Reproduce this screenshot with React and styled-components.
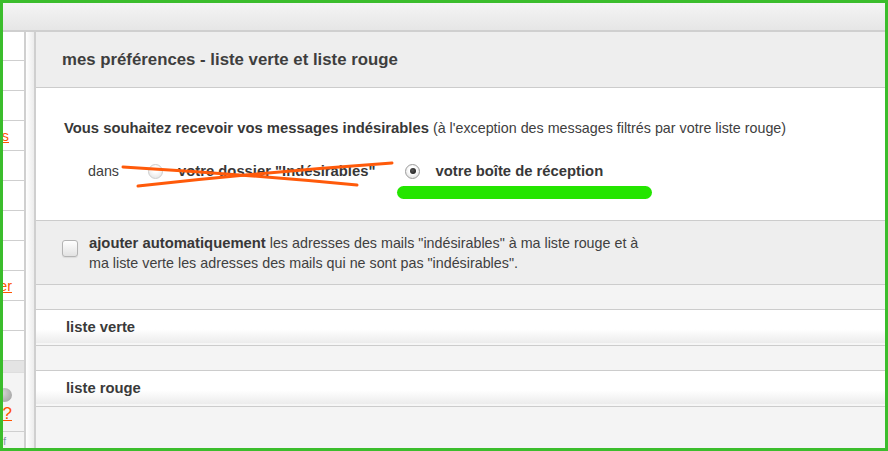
import React from 'react'
import styled, { createGlobalStyle } from 'styled-components'

const GlobalStyle = createGlobalStyle`
  html, body {
    margin: 0;
    padding: 0;
    background: #fff;
  }
  body {
    font-family: "Liberation Sans", Arial, sans-serif;
    color: #404040;
  }
`

const Page = styled.div`
  position: relative;
  width: 888px;
  height: 451px;
  overflow: hidden;
`

const Frame = styled.div`
  box-sizing: border-box;
  width: 100%;
  height: 100%;
  border: 3px solid #3bbd2c;
  display: flex;
  flex-direction: column;
  overflow: hidden;
  background: #f4f4f4;
`

const TopBar = styled.div`
  flex: 0 0 27px;
  background: linear-gradient(#f4f4f4, #e6e6e6);
  border-bottom: 2px solid #cfcfcf;
`

const Body = styled.div`
  flex: 1;
  display: flex;
  min-height: 0;
`

// left menu, cut off by the screenshot edge
const Sidebar = styled.div`
  width: 21px;
  flex-shrink: 0;
  display: flex;
  flex-direction: column;
  border-right: 2px solid #d0d0d0;
  background: #f4f4f4;
`

const SideRow = styled.div`
  height: ${p => p.$h}px;
  flex-shrink: 0;
  background: #fff;
  border-bottom: ${p => (p.$last ? 'none' : '1px solid #cfcfcf')};
  display: flex;
  align-items: center;
  justify-content: flex-end;
  padding-right: ${p => p.$pr || 15}px;
  overflow: hidden;
`

const SideLink = styled.a`
  flex-shrink: 0;
  white-space: nowrap;
  font-size: ${p => p.$size || 14.4}px;
  color: #ff5500;
  text-decoration: underline;
`

const SideBand = styled.div`
  height: 11px;
  flex-shrink: 0;
  background: #e4e4e4;
  border-top: 1px solid #d6d6d6;
`

const SidePanel = styled.div`
  flex: 1;
  display: flex;
  flex-direction: column;
  background: #f4f4f4;
  border-top: 1px solid #dedede;
`

const BallRow = styled.div`
  display: flex;
  justify-content: flex-end;
  padding: 15px 12px 0 0;
  height: 14px;
`

const Ball = styled.span`
  flex-shrink: 0;
  width: 15px;
  height: 14px;
  border-radius: 50%;
  background: radial-gradient(circle at 35% 35%, #d6d6d6, #9c9c9c);
`

const HelpRow = styled.div`
  height: 30px;
  display: flex;
  justify-content: flex-end;
  align-items: flex-start;
  padding: 2px 12px 0 0;
  box-sizing: border-box;
  border-bottom: 1px solid #cfcfcf;
  line-height: 20px;
  overflow: hidden;
`

const TinyRow = styled.div`
  flex: 1;
  display: flex;
  justify-content: flex-end;
  align-items: flex-end;
  padding-right: 18px;
  overflow: hidden;
`

const Tiny = styled.span`
  flex-shrink: 0;
  white-space: nowrap;
  font-size: 10px;
  line-height: 12px;
  color: #7d8ca3;
`

const Strip = styled.div`
  width: 8px;
  flex-shrink: 0;
  background: linear-gradient(90deg, #ffffff, #ececec);
  border-right: 2px solid #cfcfcf;
`

const Main = styled.div`
  flex: 1;
  min-width: 0;
  display: flex;
  flex-direction: column;
  background: #f4f4f4;
`

const Header = styled.div`
  height: 55px;
  flex-shrink: 0;
  display: flex;
  align-items: center;
  padding-left: 26px;
  background: #eeeeee;
  border-bottom: 1px solid #cccccc;
  font-size: 16.8px;
  font-weight: bold;
  color: #3e3e3e;
`

const Prefs = styled.div`
  height: 132px;
  flex-shrink: 0;
  padding: 30px 0 0 28px;
  box-sizing: content-box;
  height: 102px;
  background: #fff;
  border-bottom: 1px solid #cccccc;
  font-size: 14.3px;
  line-height: 20px;
`

const Strong = styled.b`
  font-size: 14.8px;
  color: #383838;
`

const ChoiceRow = styled.div`
  display: flex;
  align-items: center;
  height: 20px;
  margin-top: 23px;
  padding-left: 24px;
`

const Dans = styled.span`
  margin-right: 29px;
`

const Radio = styled.span`
  box-sizing: border-box;
  flex-shrink: 0;
  width: 15px;
  height: 15px;
  margin-right: 15px;
  border-radius: 50%;
  display: flex;
  align-items: center;
  justify-content: center;
  border: 1px solid ${p => (p.$disabled ? '#cdcdcd' : '#9c9c9c')};
  background: ${p =>
    p.$disabled
      ? 'radial-gradient(circle at 50% 35%, #ffffff 25%, #dedede 100%)'
      : 'radial-gradient(circle at 50% 40%, #ffffff 35%, #d4d4d4 100%)'};
  &::after {
    content: '';
    display: ${p => (p.$checked ? 'block' : 'none')};
    width: 6px;
    height: 6px;
    border-radius: 50%;
    background: radial-gradient(circle at 40% 40%, #555, #111);
  }
`

const ChoiceLabel = styled.b`
  font-size: 14.8px;
  color: #383838;
  margin-right: ${p => p.$gap || 0}px;
  white-space: nowrap;
`

const AutoSection = styled.div`
  height: 51px;
  flex-shrink: 0;
  display: flex;
  align-items: flex-start;
  padding: 12px 0 0 26px;
  background: #eeeeee;
  border-bottom: 1px solid #cccccc;
  font-size: 14.3px;
  line-height: 20px;
`

const Checkbox = styled.span`
  box-sizing: border-box;
  flex-shrink: 0;
  width: 16px;
  height: 17px;
  margin: 7px 11px 0 0;
  border-radius: 3px;
  border: 1px solid #b4b4b4;
  background: linear-gradient(#ffffff, #e2e2e2);
  box-shadow: 0 1px 1px rgba(0, 0, 0, 0.08);
`

const AutoText = styled.div`
  width: 570px;
`

const Band = styled.div`
  height: 24px;
  flex-shrink: 0;
  background: #f4f4f4;
  border-bottom: 1px solid #cccccc;
`

const ListRow = styled.div`
  height: 33px;
  flex-shrink: 0;
  display: flex;
  align-items: center;
  padding: 0 0 2px 30px;
  background: linear-gradient(#ffffff 0%, #ffffff 55%, #ececec 94%, #f6f6f6 94%);
  border-bottom: 1px solid #cccccc;
  font-size: 14.8px;
  font-weight: bold;
  color: #3a3a3a;
`

const Rest = styled.div`
  flex: 1;
  background: #f4f4f4;
`

const Annotations = styled.svg`
  position: absolute;
  top: 0;
  left: 0;
  pointer-events: none;
`

const sideRows = [
  { h: 28 },
  { h: 29 },
  { h: 29 },
  { h: 29, link: 'mes alertes' },
  { h: 29 },
  { h: 29 },
  { h: 29 },
  { h: 29 },
  { h: 29, link: 'filtrer', pr: 12 },
  { h: 29 },
  { h: 29, last: true }
]

export default function App() {
  return (
    <Page>
      <GlobalStyle />
      <Frame>
        <TopBar />
        <Body>
          <Sidebar>
            {sideRows.map((row, i) => (
              <SideRow key={i} $h={row.h} $last={row.last} $pr={row.pr}>
                {row.link && <SideLink>{row.link}</SideLink>}
              </SideRow>
            ))}
            <SideBand />
            <SidePanel>
              <BallRow>
                <Ball />
              </BallRow>
              <HelpRow>
                <SideLink $size={17}>aide ?</SideLink>
              </HelpRow>
              <TinyRow>
                <Tiny>conf</Tiny>
              </TinyRow>
            </SidePanel>
          </Sidebar>
          <Strip />
          <Main>
            <Header>mes préférences - liste verte et liste rouge</Header>
            <Prefs>
              <div>
                <Strong>Vous souhaitez recevoir vos messages indésirables</Strong>{' '}
                (à l'exception des messages filtrés par votre liste rouge)
              </div>
              <ChoiceRow>
                <Dans>dans</Dans>
                <Radio $disabled />
                <ChoiceLabel $gap={30}>votre dossier "Indésirables"</ChoiceLabel>
                <Radio $checked />
                <ChoiceLabel>votre boîte de réception</ChoiceLabel>
              </ChoiceRow>
            </Prefs>
            <AutoSection>
              <Checkbox />
              <AutoText>
                <Strong>ajouter automatiquement</Strong> les adresses des mails "indésirables" à ma
                liste rouge et à<br />
                ma liste verte les adresses des mails qui ne sont pas "indésirables".
              </AutoText>
            </AutoSection>
            <Band />
            <ListRow>liste verte</ListRow>
            <Band />
            <ListRow>liste rouge</ListRow>
            <Rest />
          </Main>
        </Body>
      </Frame>
      <Annotations width="888" height="451" viewBox="0 0 888 451">
        <g stroke="#ff5a0a" strokeWidth="3" strokeLinecap="round" fill="none">
          <path d="M123 167 Q240 174 357 185" />
          <path d="M138 186 Q265 172 392 163" />
        </g>
        <rect x="397" y="186" width="255" height="13" rx="6.5" fill="#24e500" />
      </Annotations>
    </Page>
  )
}
